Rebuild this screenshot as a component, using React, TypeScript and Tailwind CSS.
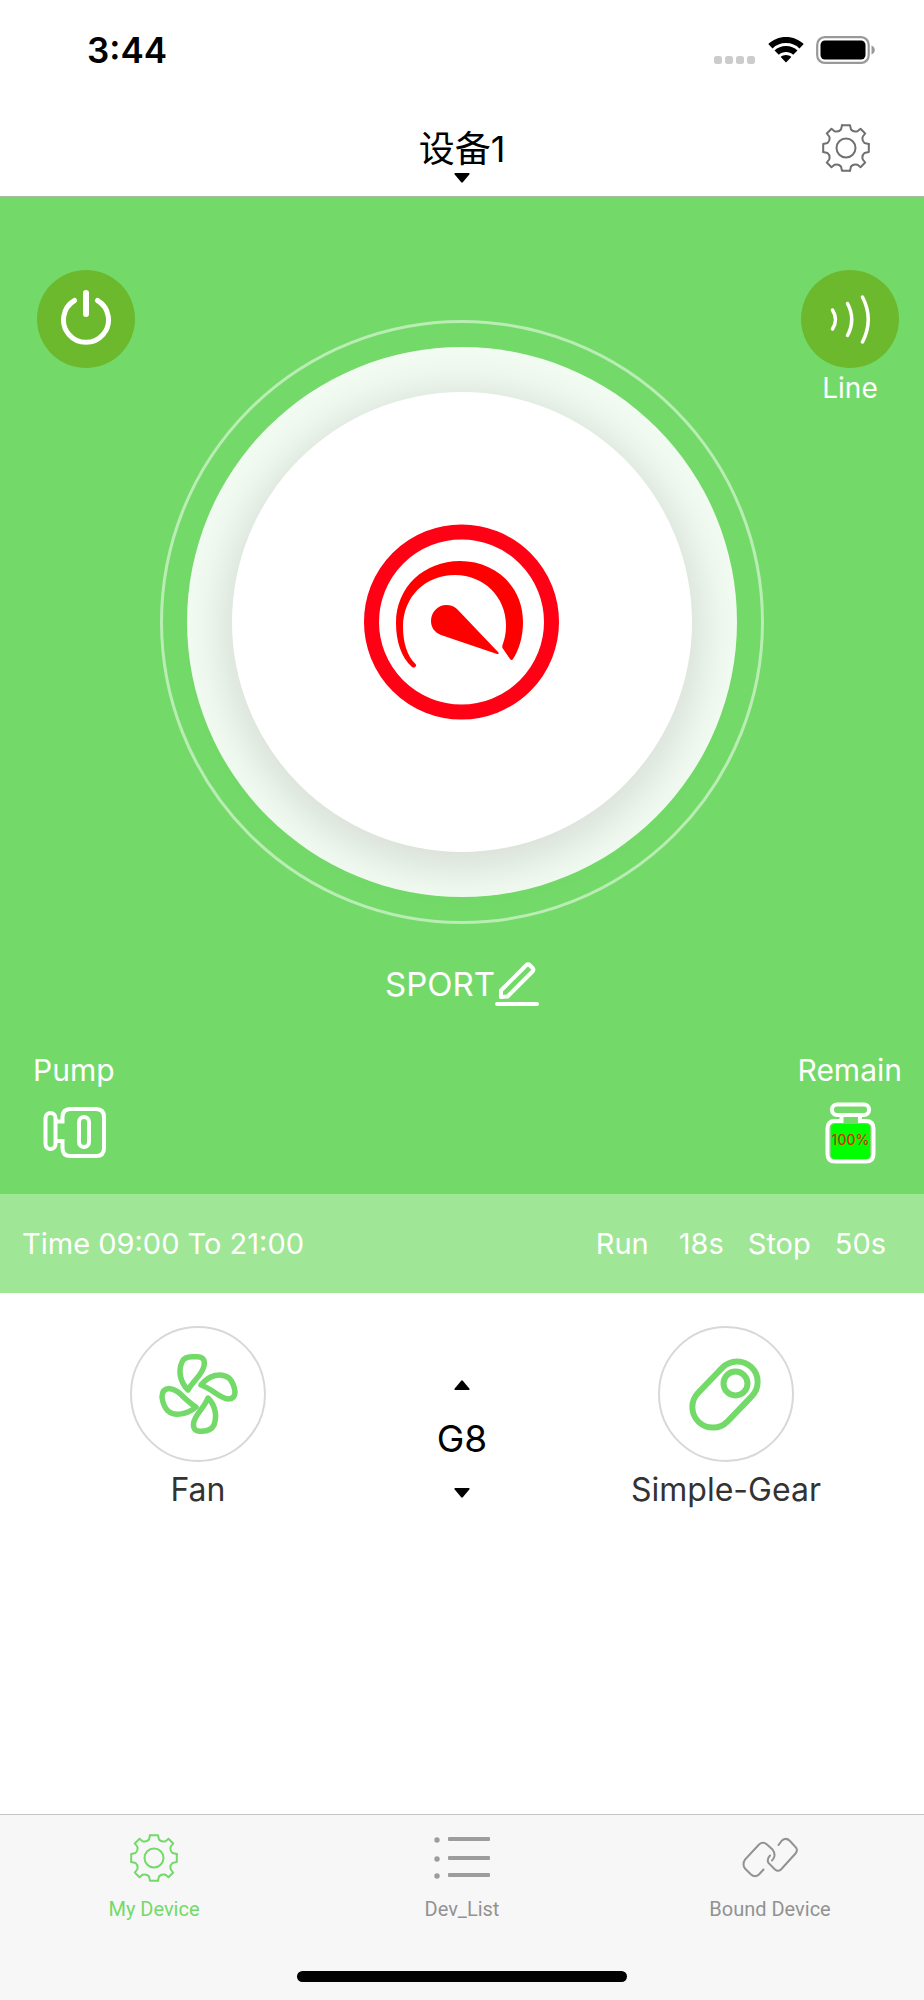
import { ReactNode, useState } from "react";

type IconProps = { className?: string };

// one quarter of the cog outline, turned four times
const COG_QUARTER =
  "M20 1.200H28L29 5.500Q31.500 8.500 35.500 7.200L38.500 4.800 43.200 9.500 40.800 12.500Q39.500 16.500 42.500 19L46.800 20";

const GearIcon = ({ className }: IconProps) => (
  <svg viewBox="0 0 48 48" fill="none" stroke="currentColor" strokeWidth="2" strokeLinejoin="round" strokeLinecap="round" className={className}>
    {[0, 90, 180, 270].map((angle) => (
      <path key={angle} d={COG_QUARTER} transform={`rotate(${angle} 24 24)`} />
    ))}
    <circle cx="24" cy="24" r="9.500" />
  </svg>
);

const ListIcon = ({ className }: IconProps) => (
  <svg viewBox="0 0 56 48" fill="#9d9d9d" className={className}>
    <circle cx="3" cy="6" r="2.700" />
    <circle cx="3" cy="25" r="2.700" />
    <circle cx="3" cy="42" r="2.700" />
    <rect x="14" y="3" width="42" height="4" rx="1" />
    <rect x="14" y="22" width="42" height="4" rx="1" />
    <rect x="14" y="39" width="42" height="4" rx="1" />
  </svg>
);

const LinkIcon = ({ className }: IconProps) => (
  <svg viewBox="0 0 56 48" fill="none" stroke="currentColor" strokeWidth="2" strokeLinecap="round" className={className}>
    <path d="M21.500 35.500 17 40.500q-4 3.500-8 0L3 34.500q-3-4 0-9L17 10.500q4-3.500 8 0l5.500 5q3.500 4.500 1 9L30 26.500" />
    <path d="M36.500 11 40 6.500q4-3.500 8 .5l6 6.500q2 3-.5 6L39 35.500q-3 2.500-6 0L26.500 29q-2-4 1.500-7.500" />
  </svg>
);

const Caret = ({ className }: IconProps) => (
  <svg viewBox="0 0 16 10" fill="currentColor" className={className}>
    <path d="M1 0h14q1 .5 .3 1.400L8.800 9.300q-.8 .9-1.600 0L.7 1.400Q0 .5 1 0z" />
  </svg>
);

const StatusBar = () => (
  <div className="flex h-[100px] items-center justify-between pr-12 pl-[87px]">
    <span className="text-[35px] leading-none font-semibold">3:44</span>
    <div className="flex items-center gap-3">
      <svg viewBox="0 0 42 28" className="h-7 w-[42px]" fill="#ccc">
        <rect x="0" y="20" width="8" height="8" rx="2.500" />
        <rect x="11" y="20" width="8" height="8" rx="2.500" />
        <rect x="22" y="20" width="8" height="8" rx="2.500" />
        <rect x="33" y="20" width="8" height="8" rx="2.500" />
      </svg>
      <svg viewBox="0 0 36 26" className="h-[26px] w-9">
        <path d="M18 0c7 0 13.300 2.700 17.700 7.100l-4.200 4.300C28 7.900 23.500 6 18 6S8 7.900 4.500 11.400L.3 7.100C4.700 2.700 11 0 18 0z" />
        <path d="M18 9c4.500 0 8.500 1.700 11.500 4.500l-4.300 4.200C23.200 16 20.800 15 18 15s-5.200 1-7.200 2.700l-4.300-4.200C9.500 10.700 13.500 9 18 9z" />
        <path d="M18 18c2 0 3.900.7 5.300 1.900L18 25.500l-5.300-5.600C14.100 18.700 16 18 18 18z" />
      </svg>
      <svg viewBox="0 0 60 28" className="h-7 w-[60px]">
        <rect x="1.200" y="1.200" width="51.500" height="25.600" rx="7.500" fill="none" stroke="#999" strokeWidth="2.200" />
        <rect x="4.500" y="4.500" width="45" height="19" rx="4.500" />
        <path d="M55.500 9.500c2 .6 3.300 2.300 3.300 4.500s-1.300 3.900-3.300 4.500z" fill="#999" />
      </svg>
    </div>
  </div>
);

const Header = () => (
  <header className="grid h-[97px] grid-cols-[1fr_auto_1fr] items-center border-b border-[#a5bba2] px-[54px]">
    <button className="col-start-2 flex flex-col items-center gap-1 pt-4">
      <span className="text-[36px] leading-10">设备1</span>
      <Caret className="h-[10px] w-4" />
    </button>
    <button aria-label="Settings" className="justify-self-end text-[#707070]">
      <GearIcon className="size-12" />
    </button>
  </header>
);

const SportDial = () => (
  <div className="flex size-[604px] items-center justify-center rounded-full border-3 border-white/50">
    <div className="flex size-[550px] items-center justify-center rounded-full bg-[#f2fbf1]">
      <div className="flex size-[460px] items-center justify-center rounded-full bg-white shadow-[0_8px_44px_8px_rgba(0,0,0,0.12)]">
        <svg viewBox="2 2 220 220" className="size-[220px]" fill="#f00">
          <circle cx="111.500" cy="112" r="90" fill="none" stroke="#ff0014" strokeWidth="15" />
          <path d="M62 157C51 147 46 131 46 113C46 77 74 51 110 51C146 51 173 77 173 112C173 127 169 140 163 149Q162 151 160 149L152.500 138Q152 137 152.500 135C154 131 156 125 156 115C156 87 134 65 105 65C75 65 53 87 53 117C53 132 57 146 65.500 154Q67 156 65 157Q64 158 62 157Z" />
          <path d="M107 99 148 142Q150 144 147 144L91 125C84 122 81 117 81 111C81 102 88 95 96 95C101 95 104 96.500 107 99Z" />
        </svg>
      </div>
    </div>
  </div>
);

const EditIcon = () => (
  <svg viewBox="0 0 44 46" className="h-[46px] w-11" fill="none" stroke="#fff" strokeWidth="4" strokeLinecap="round" strokeLinejoin="round">
    <path d="M6 29.500 31.500 4Q33 2.500 34.500 4L38 7.500Q39 9 37.500 10.500L12.500 35.500 6 36Z" />
    <path d="M2 43h40" />
  </svg>
);

const PumpIcon = () => (
  <svg viewBox="-1 0 64 54" className="h-[54px] w-16" fill="none" stroke="#fff" strokeWidth="4">
    <rect x="2.500" y="8" width="10" height="36" rx="5" />
    <path d="M13 16.500h6.500V12q0-8 8-8H53q8 0 8 8v31q0 8-8 8H27.500q-8 0-8-8v-7H13" />
    <rect x="36" y="12" width="10" height="30" rx="5" />
  </svg>
);

const BottleIcon = () => (
  <svg viewBox="-1 0 52 62" className="h-[62px] w-[52px]" fill="none" stroke="#fff" strokeWidth="4">
    <rect x="7" y="2.500" width="37" height="10.500" rx="5" />
    <rect x="6" y="22" width="39" height="35" rx="4" fill="#0f0" stroke="none" />
    <path d="M16.500 13v6H10q-7.500 0-7.500 7.500V52q0 7.500 7.500 7.500h31q7.500 0 7.500-7.500V26.500q0-7.500-7.500-7.500h-6v-6" />
    <text x="25.500" y="43" textAnchor="middle" fill="#d03000" stroke="none" fontSize="14" fontWeight="500">
      100%
    </text>
  </svg>
);

const ControlPanel = () => (
  <section className="bg-[#73da69] text-white">
    <div className="flex items-start justify-between pt-[73px] pr-[25px] pl-[37px]">
      <button aria-label="Power" className="flex size-[98px] items-center justify-center rounded-full bg-[#6cb92d]">
        <svg viewBox="0 -2 52 60" className="h-[60px] w-[52px]" fill="none" stroke="#fff" strokeLinecap="round">
          <path d="M14.500 9.500A22.500 22.500 0 1 0 37.500 9.500" strokeWidth="5" />
          <path d="M26 2v21" strokeWidth="6" />
        </svg>
      </button>
      <button className="flex flex-col items-center gap-1">
        <span className="flex size-[98px] items-center justify-center rounded-full bg-[#6cb92d]">
          <svg viewBox="0 0 42 52" className="h-[52px] w-[42px]" fill="none" stroke="#fff" strokeWidth="3.500" strokeLinecap="round">
            <path d="M3.500 17q6 9.500 0 19" />
            <path d="M18.500 10.500q8.500 16 0 32" />
            <path d="M33.500 4q11.500 22.500 0 45" />
          </svg>
        </span>
        <span className="text-[28px] leading-8">Line</span>
      </button>
    </div>
    {/* the dial reaches up between the two corner buttons */}
    <div className="-mt-[84px] flex justify-center">
      <SportDial />
    </div>
    <button className="mx-auto mt-[37px] flex items-center">
      <span className="text-[33px] leading-[46px]">SPORT</span>
      <EditIcon />
    </button>
    <div className="flex justify-between pt-[43px] pr-[22px] pb-[30px] pl-[33px]">
      <button className="flex flex-col items-center gap-[15px]">
        <span className="text-[30px] leading-10">Pump</span>
        <PumpIcon />
      </button>
      <button className="flex flex-col items-center gap-3">
        <span className="text-[30px] leading-10">Remain</span>
        <BottleIcon />
      </button>
    </div>
    <div className="flex h-[99px] items-center justify-between bg-[#9fe696] pr-[38px] pl-[22px] text-[29px]">
      <span>Time 09:00 To 21:00</span>
      <div className="flex">
        <span className="mr-[30px]">Run</span>
        <span className="mr-6">18s</span>
        <span className="mr-6">Stop</span>
        <span>50s</span>
      </div>
    </div>
  </section>
);

const RoundAction = ({ label, children }: { label: string; children: ReactNode }) => (
  <button className="flex flex-col items-center gap-2 text-[#333]">
    <span className="flex size-[136px] items-center justify-center rounded-full border-2 border-[#d8d8db] text-[#73da69]">
      {children}
    </span>
    <span className="text-[32px] leading-10">{label}</span>
  </button>
);

const GearControls = () => {
  const [gear, setGear] = useState(8);

  return (
    <section className="grid grid-cols-[3fr_1fr_3fr] justify-items-center pt-[33px]">
      <RoundAction label="Fan">
        <svg viewBox="0 0 80 80" className="size-20" fill="none" stroke="currentColor" strokeWidth="5.500" strokeLinejoin="round">
          <path d="M30 36C22 28 20 17 24 8Q26 3 34 2.800H39Q48 3 46 12C44 21 36 26 30 36Z" />
          <path d="M43 31C51 21 63 18 71 24Q76 29 77 38Q77 45 70 45C60 43 56 36 43 31Z" />
          <path d="M50 44C58 52 59 63 56 71Q53 77 44 77.200Q35 78 35.500 70C36 61 45 56 50 44Z" />
          <path d="M38 53C30 60 17 63 10 57Q5 52 4 43Q4 35 11 34.500C21 35 25 45 38 53Z" />
        </svg>
      </RoundAction>
      <div className="flex flex-col items-center pt-[21px]">
        <button aria-label="Gear up" className="p-[33px]" onClick={() => setGear(gear + 1)}>
          <Caret className="h-[10px] w-4 rotate-180" />
        </button>
        <span className="-my-[7px] text-[37px] leading-[46px]">G{gear}</span>
        <button aria-label="Gear down" className="p-[33px]" onClick={() => setGear(gear - 1)}>
          <Caret className="h-[10px] w-4" />
        </button>
      </div>
      <RoundAction label="Simple-Gear">
        <svg viewBox="1 0 80 80" className="size-20" fill="none" stroke="currentColor" strokeWidth="6">
          <rect x="2" y="20" width="76" height="41" rx="20.500" transform="rotate(-46 40 40.500)" />
          <circle cx="50.500" cy="29.500" r="12" />
        </svg>
      </RoundAction>
    </section>
  );
};

const tabs = [
  { label: "My Device", Icon: GearIcon, size: "size-12" },
  { label: "Dev_List", Icon: ListIcon, size: "h-12 w-14" },
  { label: "Bound Device", Icon: LinkIcon, size: "h-12 w-14" },
];

const TabBar = () => {
  const [active, setActive] = useState("My Device");

  return (
    <nav className="mt-auto border-t border-[#c4c4c6] bg-[#f7f7f7]">
      <div className="grid grid-cols-3 pt-[19px]">
        {tabs.map(({ label, Icon, size }) => (
          <button
            key={label}
            data-active={active === label}
            className="flex flex-col items-center gap-[13px] text-[#929292] data-[active=true]:text-[#73da69]"
            onClick={() => setActive(label)}
          >
            <Icon className={size} />
            <span className="font-[Roboto] text-[20px] leading-7">{label}</span>
          </button>
        ))}
      </div>
      <div className="mx-auto mt-12 mb-[18px] h-[11px] w-[330px] rounded-full bg-black" />
    </nav>
  );
};

export default function App() {
  return (
    <div className="flex min-h-screen flex-col bg-white font-[Inter,'Noto_Sans_CJK_SC',sans-serif] text-black">
      <StatusBar />
      <Header />
      <ControlPanel />
      <GearControls />
      <TabBar />
    </div>
  );
}
